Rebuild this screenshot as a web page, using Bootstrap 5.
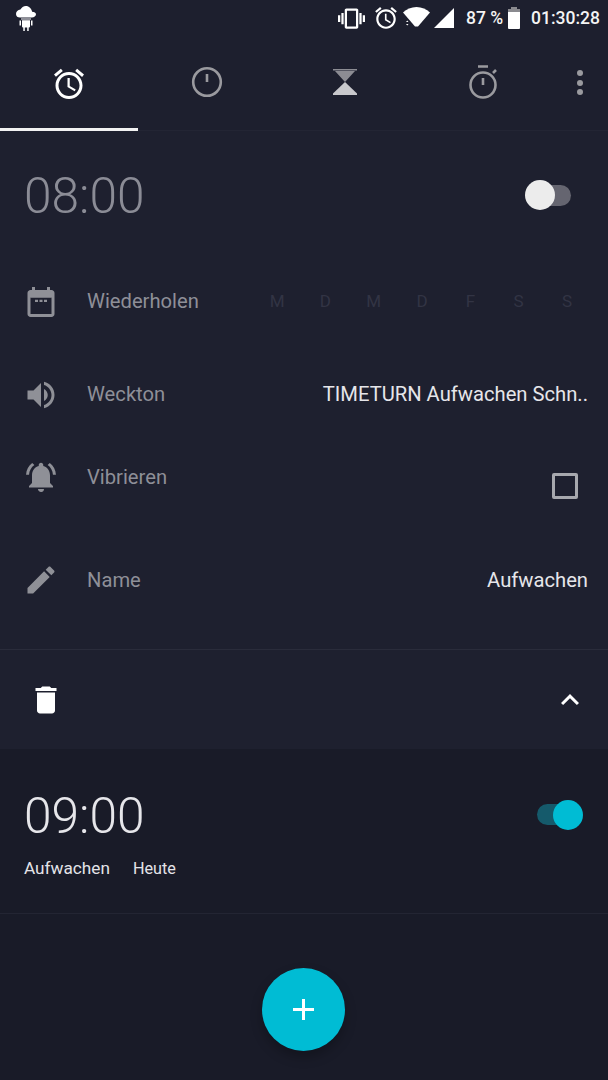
<!DOCTYPE html>
<html lang="de">

<head>
    <meta charset="UTF-8">
    <meta name="viewport" content="width=device-width, initial-scale=1.0">
    <title>Wecker</title>
    <link href="https://cdn.jsdelivr.net/npm/bootstrap@5.3.0/dist/css/bootstrap.min.css" rel="stylesheet">
    <style>
        body { background: #191b28; font-family: Roboto, "Liberation Sans", sans-serif; color: #e6e6ea; width: 608px; height: 1080px; overflow: hidden; }
        svg { display: block; flex: none; }
        .status-bar { height: 36px; padding: 0 8px 0 16px; background: #1d1f2e; font-size: 17.5px; font-weight: 500; color: #f4f4f4; }
        .status-time { margin-left: 10px; }
        .tab-bar { height: 95px; background: #1d1f2e; border-bottom: 1px solid #232534; }
        .tab-item { width: 138px; height: 95px; position: relative; padding-bottom: 3px; }
        .tab-item.is-active { padding-bottom: 0; }
        .tab-item.is-active::after { content: ""; position: absolute; left: 0; right: 0; bottom: 0; height: 3px; background: #f2f2f2; }
        .tab-more { width: 56px; margin-left: auto; height: 95px; padding-bottom: 2px; }
        .alarm-open { background: #1e202f; }
        .clock-text { font-size: 49.6px; font-weight: 300; line-height: 1; }
        .time-row { height: 128px; padding: 0 37px 0 25px; }
        .time-row .clock-text { color: #8b8c96; margin-left: -1px; margin-top: 4px; }
        .opt-row { padding: 0 20px 0 23px; font-size: 20.2px; }
        .row-repeat { height: 85px; }
        .row-tone { height: 101px; }
        .row-vibrate { height: 64px; }
        .row-name { height: 140px; padding-top: 2px; }
        .opt-label { color: #8e8f98; margin-left: 28px; }
        .opt-icon { fill: #8f9097; }
        .day-grid { display: grid; grid-template-columns: repeat(7, 48.3px); width: 338px; margin-left: auto; margin-right: -3px; text-align: center; font-size: 17px; color: #323444; }
        .box-check { width: 26px; height: 26px; border: 3px solid #a7a8ae; border-radius: 2px; margin-top: 18px; margin-right: 10px; }
        .foot-row { height: 100px; padding: 0 20px 0 28px; border-top: 1px solid #2a2c3b; }
        .switch-off, .switch-on { display: block; position: relative; height: 21px; border-radius: 11px; }
        .switch-off { width: 41px; background: #656570; }
        .switch-on { width: 40px; background: #155a6b; margin-top: 14px; }
        .switch-knob { position: absolute; top: -4.5px; width: 30px; height: 30px; border-radius: 50%; }
        .switch-off .switch-knob { left: -5px; background: #ececec; }
        .switch-on .switch-knob { right: -6px; background: #00bcd4; }
        .alarm-closed { height: 164px; padding: 0 31px 0 24px; box-shadow: 0 1px 0 #232533; }
        .clock-line { height: 107px; padding-top: 41px; }
        .clock-line .clock-text { margin-top: 2px; }
        .alarm-meta { font-size: 17.2px; color: #e4e4e8; }
        .alarm-meta span + span { margin-left: 23px; font-size: 16.2px; }
        .fab-wrap { margin-top: 54.5px; }
        .fab-add { width: 83px; height: 83px; border-radius: 50%; background: #00bcd4; border: 0; padding: 0; margin-left: -1px; box-shadow: 0 6px 12px rgba(0, 0, 0, .25); }
    </style>
</head>

<body>
    <div class="status-bar d-flex align-items-center">
        <svg width="20" height="26" viewBox="0 0 20 26" fill="#fff">
            <path d="M16.1 6.7C15.5 3.7 13 1 9.9 1 7.5 1 5.5 2.5 4.4 4.6 1.9 4.9 0 6.600 0 9c0 2.400 1.800 3.500 4 3.500h11.800c2.300 0 4.200-1.200 4.200-3.200 0-1.400-1.700-2.500-3.900-2.600z"/>
            <path d="M5 13.500h10v1H5zM6 15.200h8v6.300a1 1 0 0 1-1 1H7a1 1 0 0 1-1-1zM3.500 15.500h1.500v5H3.500zM15 15.500h1.500v5H15zM7.300 22.500h1.500v3.500H7.300zM11.200 22.500h1.500v3.500h-1.500z"/>
        </svg>
        <div class="d-flex align-items-center ms-auto">
            <svg width="27" height="27" viewBox="0 0 24 24" fill="#fff"><path d="M0 15h2V9H0v6zm3 2h2V7H3v10zm19-8v6h2V9h-2zm-3 8h2V7h-2v10zM16.500 3h-9C6.670 3 6 3.670 6 4.500v15c0 .83.670 1.500 1.500 1.500h9c.83 0 1.500-.67 1.500-1.500v-15c0-.83-.67-1.500-1.500-1.500zM16 19H8V5h8v14z"/></svg>
            <svg class="ms-2" width="26" height="26" viewBox="0 0 24 24" fill="#fff"><path d="M22 5.720l-4.600-3.860-1.290 1.530 4.600 3.860L22 5.720zM7.880 3.390L6.600 1.860 2 5.710l1.290 1.530 4.590-3.850zM12.500 8H11v6l4.750 2.850.75-1.230-4-2.370V8zM12 4c-4.970 0-9 4.030-9 9s4.030 9 9 9 9-4.030 9-9-4.030-9-9-9zm0 16c-3.870 0-7-3.130-7-7s3.130-7 7-7 7 3.130 7 7-3.130 7-7 7z"/></svg>
            <svg class="ms-1" width="27" height="22" viewBox="0 0 27 22" fill="#fff"><path d="M0 5.500C3.500 2.200 8.300 0 13.500 0S23.500 2.200 27 5.500L15 19.500h-3z"/><path d="M3 15h2.500L4.300 13.500zM3 17h2.500L4.300 18.500z"/></svg>
            <svg class="ms-1" width="20" height="20" viewBox="0 0 20 20" fill="#fff"><path d="M20 0v20H0z"/></svg>
            <span class="ms-2 me-1 ps-1">87 %</span>
            <svg width="14" height="22" viewBox="0 0 14 22" fill="#fff"><path d="M4 0h6v2H4z" fill="#8a8a8f"/><path d="M1 2h12v3H1z" fill="#8a8a8f"/><path d="M1 5h12v16a1 1 0 0 1-1 1H2a1 1 0 0 1-1-1z"/></svg>
            <span class="status-time">01:30:28</span>
        </div>
    </div>

    <div class="tab-bar d-flex">
        <div class="tab-item is-active d-flex justify-content-center align-items-center">
            <svg width="36" height="36" viewBox="0 0 24 24" fill="#fff"><path d="M22 5.720l-4.600-3.860-1.290 1.530 4.600 3.860L22 5.720zM7.880 3.390L6.600 1.860 2 5.710l1.290 1.530 4.590-3.850zM12.500 8H11v6l4.750 2.850.75-1.230-4-2.370V8zM12 4c-4.970 0-9 4.030-9 9s4.030 9 9 9 9-4.030 9-9-4.030-9-9-9zm0 16c-3.870 0-7-3.130-7-7s3.130-7 7-7 7 3.130 7 7-3.130 7-7 7z"/></svg>
        </div>
        <div class="tab-item d-flex justify-content-center align-items-center">
            <svg width="32" height="32" viewBox="0 0 32 32" fill="none" stroke="#9a9a9f" stroke-width="2.600"><circle cx="16" cy="16" r="13.800"/><path d="M16 8v8"/></svg>
        </div>
        <div class="tab-item d-flex justify-content-center align-items-center">
            <svg width="24" height="26" viewBox="0 0 24 26"><path d="M0 0h24v1.500H0zM2 2h20l-10 11z" fill="#8c8c93"/><path d="M12 13l12 11.500V26H0v-1.500z" fill="#c8c8cc"/></svg>
        </div>
        <div class="tab-item d-flex justify-content-center align-items-center">
            <svg width="30" height="34" viewBox="0 0 30 34" fill="none" stroke="#9a9a9f" stroke-width="2.600"><circle cx="15" cy="20" r="12.500"/><path d="M15 13v7M10 1.500h10M25 8l3-3"/></svg>
        </div>
        <div class="tab-more d-flex justify-content-center align-items-center">
            <svg width="8" height="28" viewBox="0 0 8 28" fill="#9a9a9f"><circle cx="4" cy="4" r="3"/><circle cx="4" cy="14" r="3"/><circle cx="4" cy="23" r="3"/></svg>
        </div>
    </div>

    <div class="alarm-open">
        <div class="time-row d-flex align-items-center justify-content-between">
            <span class="clock-text">08:00</span>
            <span class="switch-off"><span class="switch-knob"></span></span>
        </div>
        <div class="opt-row row-repeat d-flex align-items-center">
            <svg class="opt-icon" width="36" height="36" viewBox="0 0 24 24"><path d="M19 4h-1V2h-2v2H8V2H6v2H5c-1.100 0-2 .9-2 2v14c0 1.100.9 2 2 2h14c1.100 0 2-.9 2-2V6c0-1.100-.9-2-2-2zm0 16H5V9h14v11z"/><path d="M5 9h14v-.5H5zM8 10.500h2v1.500H8zM11 10.500h2v1.500h-2zM14 10.500h2v1.500h-2z"/></svg>
            <span class="opt-label">Wiederholen</span>
            <div class="day-grid"><span>M</span><span>D</span><span>M</span><span>D</span><span>F</span><span>S</span><span>S</span></div>
        </div>
        <div class="opt-row row-tone d-flex align-items-center">
            <svg class="opt-icon" width="36" height="36" viewBox="0 0 24 24"><path d="M3 9v6h4l5 5V4L7 9H3zm13.500 3c0-1.770-1.020-3.290-2.500-4.030v8.050c1.480-.73 2.500-2.250 2.500-4.020zM14 3.230v2.060c2.890.86 5 3.540 5 6.710s-2.110 5.850-5 6.710v2.060c4.010-.91 7-4.490 7-8.770s-2.990-7.860-7-8.770z"/></svg>
            <span class="opt-label">Weckton</span>
            <span class="ms-auto">TIMETURN Aufwachen Schn..</span>
        </div>
        <div class="opt-row row-vibrate d-flex align-items-center">
            <svg class="opt-icon" width="36" height="36" viewBox="0 0 24 24"><path d="M7.580 4.080L6.150 2.650C3.750 4.480 2.170 7.300 2.030 10.500h2c.15-2.650 1.510-4.970 3.550-6.420zm12.390 6.420h2c-.15-3.200-1.730-6.020-4.120-7.850l-1.420 1.430c2.020 1.450 3.390 3.770 3.540 6.420zM18 11c0-3.070-1.640-5.640-4.500-6.320V4c0-.83-.67-1.500-1.500-1.500s-1.500.67-1.500 1.500v.68C7.630 5.360 6 7.920 6 11v5l-2 2v1h16v-1l-2-2v-5zm-6 11c.14 0 .27-.01.4-.04.65-.14 1.180-.58 1.440-1.180.1-.24.15-.5.15-.78h-4c.01 1.100.9 2 2.010 2z"/></svg>
            <span class="opt-label">Vibrieren</span>
            <span class="box-check ms-auto"></span>
        </div>
        <div class="opt-row row-name d-flex align-items-center">
            <svg class="opt-icon" width="36" height="36" viewBox="0 0 24 24"><path d="M3 17.250V21h3.750L17.810 9.940l-3.750-3.750L3 17.250zM20.710 7.040c.39-.39.39-1.020 0-1.410l-2.340-2.340c-.39-.39-1.020-.39-1.410 0l-1.830 1.830 3.750 3.750 1.830-1.830z"/></svg>
            <span class="opt-label">Name</span>
            <span class="ms-auto">Aufwachen</span>
        </div>
        <div class="foot-row d-flex align-items-center justify-content-between">
            <svg width="36" height="36" viewBox="0 0 24 24" fill="#fff"><path d="M6 19c0 1.100.9 2 2 2h8c1.100 0 2-.9 2-2V7H6v12zM19 4h-3.500l-1-1h-5l-1 1H5v2h14V4z"/></svg>
            <svg width="36" height="36" viewBox="0 0 24 24" fill="#fff"><path d="M12 8l-6 6 1.410 1.410L12 10.830l4.590 4.580L18 14z"/></svg>
        </div>
    </div>

    <div class="alarm-closed">
        <div class="clock-line d-flex justify-content-between">
            <span class="clock-text">09:00</span>
            <span class="switch-on"><span class="switch-knob"></span></span>
        </div>
        <div class="alarm-meta"><span>Aufwachen</span><span>Heute</span></div>
    </div>

    <div class="fab-wrap d-flex justify-content-center">
        <button class="fab-add d-flex justify-content-center align-items-center" type="button" aria-label="Hinzufügen">
            <svg width="21" height="21" viewBox="0 0 21 21" fill="#fff"><path d="M9 0h3v21H9zM0 9h21v3H0z"/></svg>
        </button>
    </div>

    <script src="https://cdn.jsdelivr.net/npm/bootstrap@5.3.0/dist/js/bootstrap.bundle.min.js"></script>
</body>

</html>
